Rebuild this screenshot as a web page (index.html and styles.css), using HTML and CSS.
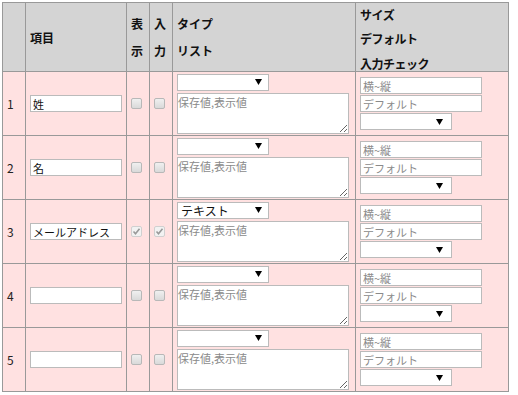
FILE: index.html
```html
<!DOCTYPE html>
<html lang="ja">
<head>
    <meta charset="UTF-8">
    <meta name="viewport" content="width=device-width, initial-scale=1.0">
    <title>項目設定</title>
    <link rel="stylesheet" href="styles.css">
</head>
<body>
    <table class="fields">
        <colgroup>
            <col class="c-no">
            <col class="c-name">
            <col class="c-flag">
            <col class="c-flag">
            <col class="c-type">
            <col class="c-size">
        </colgroup>
        <thead>
            <tr>
                <th></th>
                <th class="h-name">項目</th>
                <th class="h-two">表<br>示</th>
                <th class="h-two">入<br>力</th>
                <th class="h-two">タイプ<br>リスト</th>
                <th class="h-three"><div class="stack">サイズ<br>デフォルト<br>入力チェック</div></th>
            </tr>
        </thead>
        <tbody>
            <tr>
                <td class="no">1</td>
                <td><input type="text" class="name" value="姓"></td>
                <td class="flag"><input type="checkbox"></td>
                <td class="flag"><input type="checkbox"></td>
                <td class="type">
                    <select><option></option></select>
                    <textarea placeholder="保存値,表示値"></textarea>
                </td>
                <td class="size">
                    <input type="text" placeholder="横~縦">
                    <input type="text" placeholder="デフォルト">
                    <select><option></option></select>
                </td>
            </tr>
            <tr>
                <td class="no">2</td>
                <td><input type="text" class="name" value="名"></td>
                <td class="flag"><input type="checkbox"></td>
                <td class="flag"><input type="checkbox"></td>
                <td class="type">
                    <select><option></option></select>
                    <textarea placeholder="保存値,表示値"></textarea>
                </td>
                <td class="size">
                    <input type="text" placeholder="横~縦">
                    <input type="text" placeholder="デフォルト">
                    <select><option></option></select>
                </td>
            </tr>
            <tr>
                <td class="no">3</td>
                <td><input type="text" class="name" value="メールアドレス"></td>
                <td class="flag"><input type="checkbox" checked></td>
                <td class="flag"><input type="checkbox" checked></td>
                <td class="type">
                    <select><option>テキスト</option></select>
                    <textarea placeholder="保存値,表示値"></textarea>
                </td>
                <td class="size">
                    <input type="text" placeholder="横~縦">
                    <input type="text" placeholder="デフォルト">
                    <select><option></option></select>
                </td>
            </tr>
            <tr>
                <td class="no">4</td>
                <td><input type="text" class="name"></td>
                <td class="flag"><input type="checkbox"></td>
                <td class="flag"><input type="checkbox"></td>
                <td class="type">
                    <select><option></option></select>
                    <textarea placeholder="保存値,表示値"></textarea>
                </td>
                <td class="size">
                    <input type="text" placeholder="横~縦">
                    <input type="text" placeholder="デフォルト">
                    <select><option></option></select>
                </td>
            </tr>
            <tr>
                <td class="no">5</td>
                <td><input type="text" class="name"></td>
                <td class="flag"><input type="checkbox"></td>
                <td class="flag"><input type="checkbox"></td>
                <td class="type">
                    <select><option></option></select>
                    <textarea placeholder="保存値,表示値"></textarea>
                </td>
                <td class="size">
                    <input type="text" placeholder="横~縦">
                    <input type="text" placeholder="デフォルト">
                    <select><option></option></select>
                </td>
            </tr>
        </tbody>
    </table>
</body>
</html>
```

FILE: styles.css
```css
body {
    margin: 2px;
    font-family: "Noto Sans CJK JP", "Noto Sans", sans-serif;
    font-size: 12px;
    color: #222;
    background: #fff;
}
.fields {
    border-collapse: collapse;
    table-layout: fixed;
    width: 507px;
    border: 1px solid #888;
}
.c-no { width: 23px; }
.c-name { width: 101px; }
.c-flag { width: 23px; }
.c-type { width: 183px; }
.c-size { width: 153px; }
.fields th, .fields td {
    border: 1px solid #999;
    padding: 0 4px;
    vertical-align: middle;
    text-align: left;
}
.fields th {
    background: #d4d4d4;
    height: 68px;
    font-size: 12px;
    font-weight: bold;
    color: #111;
}
.h-name {
    padding-left: 6px;
}
.h-two {
    line-height: 27px;
    padding-bottom: 12px;
}
.h-three {
    vertical-align: top;
}
.stack {
    height: 68px;
    margin-top: -1px;
    line-height: 24.5px;
    letter-spacing: -0.5px;
}
.fields td {
    background: #ffe1e1;
    height: 63px;
}
.no {
    padding-left: 6px;
}
input, select, textarea {
    font-family: inherit;
    font-size: 12px;
    box-sizing: border-box;
    margin: 0;
}
input[type="text"] {
    height: 17px;
    border: 1px solid #bbb;
    padding: 0 2px;
    background: #fff;
    color: #111;
    font-size: 11px;
}
input::placeholder, textarea::placeholder {
    color: #8a8a8a;
}
.name {
    width: 92px;
}
select {
    appearance: none;
    -webkit-appearance: none;
    width: 92px;
    height: 17px;
    border: 1px solid #bbb;
    border-radius: 0;
    padding: 0 3px;
    line-height: 15px;
    color: #111;
    background: #fff url("data:image/svg+xml,%3Csvg xmlns='http://www.w3.org/2000/svg' width='7' height='6'%3E%3Cpath d='M0 0h7L3.5 6z' fill='%23000'/%3E%3C/svg%3E") no-repeat right 6px center;
}
.size select {
    background-position: right 8px center;
}
.flag {
    padding: 0 5px;
}
.flag input {
    appearance: none;
    -webkit-appearance: none;
    display: block;
    width: 11px;
    height: 11px;
    margin: 0;
    border: 1px solid #b8b8b8;
    border-radius: 2px;
    background: linear-gradient(#f0f0f0, #d9d9d9);
}
.flag input:checked {
    background: #f2f2f2 url("data:image/svg+xml,%3Csvg xmlns='http://www.w3.org/2000/svg' width='9' height='9'%3E%3Cpath d='M1.5 4.5l2 2.2L7.5 1.8' stroke='%23999' stroke-width='1.6' fill='none'/%3E%3C/svg%3E") no-repeat center;
    border-color: #d0d0d0;
}
.type {
    vertical-align: top;
    padding: 4px 4px 0 5px;
}
.type select {
    display: block;
}
textarea {
    display: block;
    width: 172px;
    height: 41px;
    margin-top: 2px;
    border: 1px solid #bbb;
    padding: 0;
    font-size: 11px;
    resize: both;
    background: #fff;
}
.size input, .size select {
    display: block;
}
.size input {
    width: 122px;
    margin-bottom: 1px;
}
```
